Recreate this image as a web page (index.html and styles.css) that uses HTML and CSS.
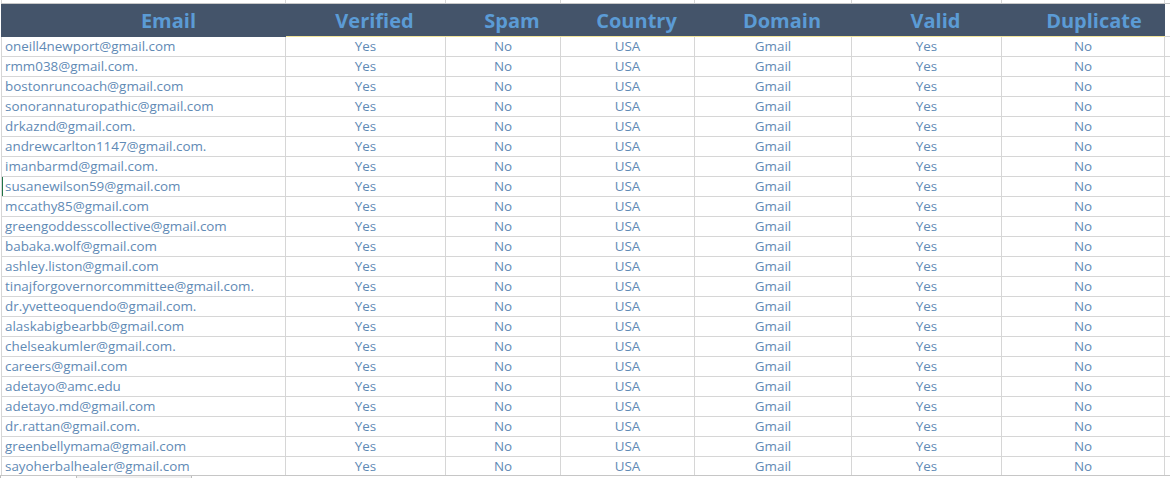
FILE: index.html
```html
<!DOCTYPE html>
<html>
<head>
<meta charset="utf-8">
<link rel="stylesheet" href="styles.css">
</head>
<body>
<div class="sheet">
  <table class="grid">
    <colgroup>
      <col class="c-email"><col class="c-ver"><col class="c-spam"><col class="c-country"><col class="c-domain"><col class="c-valid"><col class="c-dup"><col class="c-rest">
    </colgroup>
    <thead>
      <tr class="above"><td></td><td></td><td></td><td></td><td></td><td></td><td></td><td></td></tr>
      <tr class="head">
        <th class="h-email">Email</th><th>Verified</th><th>Spam</th><th>Country</th><th>Domain</th><th>Valid</th><th class="h-dup">Duplicate</th><th class="rest"></th>
      </tr>
    </thead>
    <tbody id="rows"></tbody>
  </table>
  <div class="tabs">
    <div class="tab t1"></div>
    <div class="tab t2"></div>
  </div>
</div>
<script src="app.js"></script>
</body>
</html>
```

FILE: app.js
```js
const emails = [
  "oneill4newport@gmail.com","rmm038@gmail.com.","bostonruncoach@gmail.com","sonorannaturopathic@gmail.com",
  "drkaznd@gmail.com.","andrewcarlton1147@gmail.com.","imanbarmd@gmail.com.","susanewilson59@gmail.com",
  "mccathy85@gmail.com","greengoddesscollective@gmail.com","babaka.wolf@gmail.com","ashley.liston@gmail.com",
  "tinajforgovernorcommittee@gmail.com.","dr.yvetteoquendo@gmail.com.","alaskabigbearbb@gmail.com","chelseakumler@gmail.com.",
  "careers@gmail.com","adetayo@amc.edu","adetayo.md@gmail.com","dr.rattan@gmail.com.",
  "greenbellymama@gmail.com","sayoherbalhealer@gmail.com"
];
const tb = document.getElementById("rows");
emails.forEach((e, i) => {
  const tr = document.createElement("tr");
  if (i === 7) tr.className = "sel";
  tr.innerHTML = `<td class="em">${e}</td><td>Yes</td><td>No</td><td>USA</td><td>Gmail</td><td>Yes</td><td>No</td><td class="rest"></td>`;
  tb.appendChild(tr);
});
```

FILE: styles.css
```css
html, body {
  margin: 0;
  padding: 0;
  background: #ffffff;
  overflow: hidden;
}
.sheet {
  width: 1170px;
  height: 478px;
  position: relative;
  overflow: hidden;
  font-family: "Open Sans", "Noto Sans", sans-serif;
}
.grid {
  border-collapse: collapse;
  table-layout: fixed;
  width: 1170px;
  margin-left: 1px;
}
.c-email { width: 284px; }
.c-ver { width: 160px; }
.c-spam { width: 115px; }
.c-country { width: 134px; }
.c-domain { width: 157px; }
.c-valid { width: 150px; }
.c-dup { width: 163px; }
.c-rest { width: 6px; }
.grid td, .grid th {
  border: 1px solid #d6d6d6;
  padding: 0;
  overflow: hidden;
  white-space: nowrap;
}
.above td {
  height: 3px;
  border-top: none;
  border-bottom: 1px solid #c8c8c8;
}
.head th {
  background: #44546a;
  color: #5b9bd5;
  font-weight: 700;
  font-size: 20px;
  height: 31px;
  line-height: 31px;
  padding-top: 1px;
  padding-left: 18px;
  box-sizing: border-box;
  text-align: center;
  border-color: #44546a;
  border-bottom: 1px solid #f0e39a;
}
.head th.h-email {
  padding-left: 50px;
  border-bottom-color: #44546a;
}
.head th.h-dup {
  padding-left: 22px;
}
.head th.rest {
  background: #ffffff;
  border-color: #d6d6d6;
  border-left-color: #d6d6d6;
  padding-left: 0;
}
tbody td {
  height: 19px;
  line-height: 19px;
  font-size: 13.4px;
  color: #5f8ab5;
  text-align: center;
  vertical-align: middle;
  padding-top: 1px;
  box-sizing: border-box;
}
tbody td.em {
  text-align: left;
  padding-left: 3px;
}
tbody tr.sel td.em {
  box-shadow: inset 1px 0 0 #217346;
}
.tabs {
  position: absolute;
  left: 0;
  top: 475px;
  width: 1170px;
  height: 3px;
  background: #f0f0f0;
  border-top: 1px solid #c6c6c6;
}
.tab {
  position: absolute;
  top: 0;
  height: 3px;
  background: #ffffff;
  border-left: 1px solid #bdbdbd;
  border-right: 1px solid #bdbdbd;
}
.t1 { left: 0; width: 75px; }
.t2 { left: 191px; width: 979px; }
```
